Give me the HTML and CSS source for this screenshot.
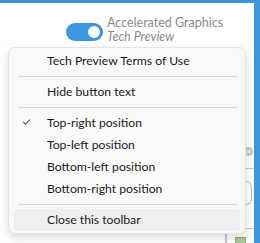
FILE: index.html
```html
<!DOCTYPE html>
<html lang="en">
<head>
  <meta charset="UTF-8" />
  <title>Toolbar menu</title>
  <link rel="stylesheet" href="styles.css">
</head>
<body>
  <div class="frame">
    <div class="backdrop">
      <span class="bg-line bg-line-1"></span>
      <span class="bg-close">×</span>
      <span class="bg-bracket"></span>
      <span class="bg-line bg-line-2"></span>
      <span class="bg-vline"></span>
      <span class="bg-square"></span>
    </div>

    <div class="toolbar">
      <span class="toggle"><span class="thumb"></span></span>
      <div class="label">
        <span class="label-title">Accelerated Graphics</span>
        <span class="label-sub">Tech Preview</span>
      </div>
    </div>

    <ul class="menu">
      <li class="item">Tech Preview Terms of Use</li>
      <li class="sep"></li>
      <li class="item">Hide button text</li>
      <li class="sep"></li>
      <li class="item checked">Top-right position</li>
      <li class="item">Top-left position</li>
      <li class="item">Bottom-left position</li>
      <li class="item">Bottom-right position</li>
      <li class="sep"></li>
      <li class="item hover">Close this toolbar</li>
    </ul>
  </div>
</body>
</html>
```

FILE: styles.css
```css
/* Toolbar overflow menu */
:root { --blue: #3a96dd; --text: #1b1b1b; --muted: #8a8a8a; --line: #d6d6d6; }
* { margin: 0; padding: 0; box-sizing: border-box; }
html, body { width: 260px; height: 243px; overflow: hidden; background: #fff; }
body { font-family: Lato, 'Noto Sans', sans-serif; font-size: 12.2px; color: var(--text); }

.frame {
  position: relative;
  width: 260px; height: 243px;
  border-top: 3px solid var(--blue);
  border-right: 6px solid var(--blue);
  overflow: hidden;
}

/* content behind the popup */
.backdrop { position: absolute; inset: 0; }
.bg-line { position: absolute; left: 242px; width: 12px; height: 1px; background: #c8c8c8; }
.bg-line-1 { top: 165px; }
.bg-line-2 { top: 225px; }
.bg-close {
  position: absolute; left: 244px; top: 144px;
  width: 9px; height: 9px; border-radius: 50%;
  background: #c4c4c4; color: #fff;
  font-size: 9px; line-height: 9px; text-align: center;
}
.bg-bracket {
  position: absolute; left: 240px; top: 178px;
  width: 12px; height: 24px;
  border: 1px solid #b8b8b8; border-left: none;
  border-radius: 0 6px 6px 0;
}
.bg-vline { position: absolute; left: 225px; top: 228px; width: 2px; height: 20px; background: #c8c8c8; }
.bg-square {
  position: absolute; left: 235px; top: 234px;
  width: 11px; height: 12px;
  background: #a9c99a; border: 1px solid #8db07e;
}

.toolbar {
  position: relative;
  display: flex; align-items: flex-start; gap: 4px;
  height: 44px;
  padding: 13px 0 0 66px;
}
.toggle {
  display: flex; align-items: center; justify-content: flex-end;
  width: 37px; height: 18px; padding-right: 3px;
  margin-top: 7px;
  background: var(--blue); border-radius: 9px;
}
.thumb { width: 12px; height: 12px; border-radius: 50%; background: #fff; }
.label {
  display: flex; flex-direction: column;
  font-size: 12.5px; line-height: 14px; color: var(--muted);
}
.label-sub { font-style: italic; }

.menu {
  position: relative;
  list-style: none;
  width: 238px; margin-left: 8px;
  padding: 2px 5px 2px;
  background: #f9f9f9;
  border: 1px solid #e4e4e4;
  border-radius: 7px;
  box-shadow: 0 4px 10px rgba(0,0,0,0.14);
}
.item {
  position: relative;
  height: 22px; line-height: 22px;
  padding-left: 33px;
  border-radius: 4px;
}
.item.checked::before {
  content: '';
  position: absolute; left: 9px; top: 7px;
  width: 6px; height: 3px;
  border-left: 1px solid #555; border-bottom: 1px solid #555;
  transform: rotate(-45deg);
}
.item.hover { background: #efefef; }
.sep { height: 1px; margin: 4px 3px 4px 4px; background: var(--line); }
```
